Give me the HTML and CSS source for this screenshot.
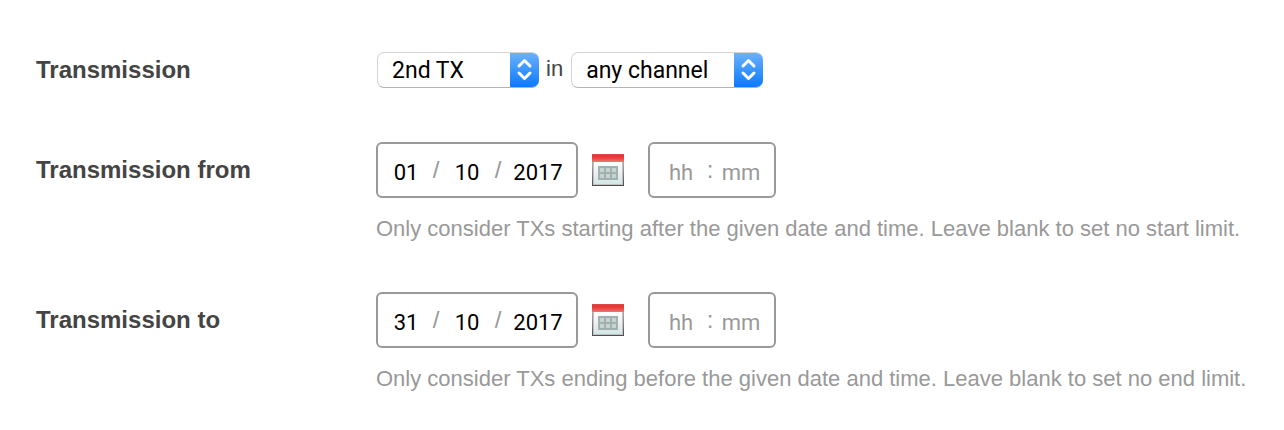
FILE: index.html
```html
<!DOCTYPE html>
<html lang="en">
<head>
    <meta charset="UTF-8">
    <meta name="viewport" content="width=device-width, initial-scale=1.0">
    <title>Transmission search</title>
    <link rel="stylesheet" href="styles.css">
</head>
<body>

    <!-- calendar icon, used by both date rows -->
    <svg class="sprite" aria-hidden="true">
        <defs>
            <linearGradient id="calTop" x1="0" y1="0" x2="0" y2="1">
                <stop offset="0" stop-color="#d94a48"/>
                <stop offset="0.3" stop-color="#e43533"/>
                <stop offset="0.6" stop-color="#ee4a48"/>
                <stop offset="1" stop-color="#e87a79"/>
            </linearGradient>
            <linearGradient id="calPage" x1="0" y1="0" x2="0" y2="1">
                <stop offset="0" stop-color="#ffffff"/>
                <stop offset="1" stop-color="#d3e6e5"/>
            </linearGradient>
            <linearGradient id="calEdge" x1="0" y1="0" x2="0" y2="1">
                <stop offset="0.2" stop-color="#d8a5a5"/>
                <stop offset="0.6" stop-color="#8d8285"/>
                <stop offset="1" stop-color="#54484c"/>
            </linearGradient>
        </defs>
        <symbol id="calendar" viewBox="0 0 32 32">
            <rect width="32" height="32" fill="url(#calEdge)"/>
            <rect x="1" y="7" width="30" height="24" fill="#b9c3c3"/>
            <rect x="2" y="7" width="28" height="23" fill="url(#calPage)"/>
            <rect width="32" height="8" fill="url(#calTop)"/>
            <rect x="6" y="12" width="20" height="14" fill="#a2b1b0"/>
            <path d="M8 14h4v4H8zM14 14h4v4h-4zM20 14h4v4h-4zM8 20h4v4H8zM14 20h4v4h-4zM20 20h4v4h-4z" fill="#c6d3d1"/>
        </symbol>
    </svg>

    <form class="search-form">
        <div class="row">
            <label class="row-label" for="tx">Transmission</label>
            <div class="row-body">
                <div class="controls">
                    <span class="select-wrap">
                        <select class="select select-tx" id="tx">
                            <option>1st TX</option>
                            <option selected>2nd TX</option>
                        </select>
                        <svg class="arrows" viewBox="0 0 29 34" aria-hidden="true"><path d="M9 13l5.5-5.5 5.5 5.5M9 20l5.5 5.5 5.5-5.5"/></svg>
                    </span>
                    <label class="in" for="channel">in</label>
                    <span class="select-wrap">
                        <select class="select select-channel" id="channel">
                            <option>any channel</option>
                        </select>
                        <svg class="arrows" viewBox="0 0 29 34" aria-hidden="true"><path d="M9 13l5.5-5.5 5.5 5.5M9 20l5.5 5.5 5.5-5.5"/></svg>
                    </span>
                </div>
            </div>
        </div>

        <div class="row">
            <label class="row-label" for="fromDay">Transmission from</label>
            <div class="row-body">
                <div class="controls">
                    <div class="box date-box">
                        <input class="part day" id="fromDay" type="text" value="01" maxlength="2">
                        <span class="slash">/</span>
                        <input class="part month" type="text" value="10" maxlength="2" aria-label="From month">
                        <span class="slash">/</span>
                        <input class="part year" type="text" value="2017" maxlength="4" aria-label="From year">
                    </div>
                    <button class="cal-btn" type="button" aria-label="Pick start date"><svg class="cal-icon"><use href="#calendar"/></svg></button>
                    <div class="box time-box">
                        <input class="part hour" type="text" placeholder="hh" maxlength="2" aria-label="From hour">
                        <span class="colon">:</span>
                        <input class="part minute" type="text" placeholder="mm" maxlength="2" aria-label="From minute">
                    </div>
                </div>
                <p class="help">Only consider TXs starting after the given date and time. Leave blank to set no start limit.</p>
            </div>
        </div>

        <div class="row">
            <label class="row-label" for="toDay">Transmission to</label>
            <div class="row-body">
                <div class="controls">
                    <div class="box date-box">
                        <input class="part day" id="toDay" type="text" value="31" maxlength="2">
                        <span class="slash">/</span>
                        <input class="part month" type="text" value="10" maxlength="2" aria-label="To month">
                        <span class="slash">/</span>
                        <input class="part year" type="text" value="2017" maxlength="4" aria-label="To year">
                    </div>
                    <button class="cal-btn" type="button" aria-label="Pick end date"><svg class="cal-icon"><use href="#calendar"/></svg></button>
                    <div class="box time-box">
                        <input class="part hour" type="text" placeholder="hh" maxlength="2" aria-label="To hour">
                        <span class="colon">:</span>
                        <input class="part minute" type="text" placeholder="mm" maxlength="2" aria-label="To minute">
                    </div>
                </div>
                <p class="help">Only consider TXs ending before the given date and time. Leave blank to set no end limit.</p>
            </div>
        </div>
    </form>

</body>
</html>
```
FILE: styles.css
```css
* {
    margin: 0;
    padding: 0;
    box-sizing: border-box;
}

body {
    background: #fff;
    color: #444;
    font-family: "Liberation Sans", Arial, sans-serif;
    font-size: 22px;
}

.sprite {
    position: absolute;
    width: 0;
    height: 0;
}

.search-form {
    display: flex;
    flex-direction: column;
    gap: 44px;
    padding: 42px 0 30px 36px;
}

.row {
    display: grid;
    grid-template-columns: 340px 1fr;
}

.row-label {
    font-size: 24px;
    font-weight: bold;
    line-height: 56px;
}

.controls {
    display: flex;
    align-items: center;
    min-height: 56px;
}

.select-wrap {
    position: relative;
    display: flex;
    margin: 0 1px;
}

.select {
    appearance: none;
    height: 36px;
    padding: 0 40px 0 14px;
    border: 1px solid #d4d4d4;
    border-bottom-color: #b4b4b4;
    border-radius: 7px;
    background: #fff;
    color: #000;
    font-family: Roboto, sans-serif;
    font-size: 23px;
}

.select-tx {
    width: 162px;
}

.select-channel {
    width: 192px;
}

.arrows {
    position: absolute;
    top: 1px;
    right: 0;
    width: 29px;
    height: 34px;
    border-radius: 0 7px 7px 0;
    background: linear-gradient(#6bb1fa, #0a7aff);
    fill: none;
    stroke: #fff;
    stroke-width: 3;
    stroke-linecap: round;
    stroke-linejoin: round;
    pointer-events: none;
}

.in {
    padding: 0 7px 2px 6px;
}

.box {
    display: flex;
    align-items: center;
    height: 56px;
    border: 2px solid #999;
    border-radius: 6px;
    background: #fff;
    color: #999;
}

.date-box {
    padding: 0 6px;
}

.time-box {
    padding: 0 8px;
}

.part {
    height: 52px;
    padding-top: 4px;
    border: none;
    outline: none;
    background: none;
    color: #000;
    font-family: Roboto, sans-serif;
    font-size: 22px;
    text-align: center;
}

.part::placeholder {
    color: #999;
    opacity: 1;
}

.day {
    width: 44px;
}

.month,
.hour {
    width: 46px;
}

.year {
    width: 64px;
}

.minute {
    width: 50px;
}

.slash,
.colon {
    font-size: 24px;
    text-align: center;
}

.slash {
    width: 16px;
}

.colon {
    width: 12px;
}

.cal-btn {
    margin: 0 24px 0 14px;
    border: none;
    background: none;
    cursor: pointer;
}

.cal-icon {
    display: block;
    width: 32px;
    height: 32px;
}

.help {
    margin: 17px 0 5px;
    color: #999;
    line-height: 28px;
}

@media (max-width: 900px) {
    .row {
        grid-template-columns: 1fr;
    }
}
```
